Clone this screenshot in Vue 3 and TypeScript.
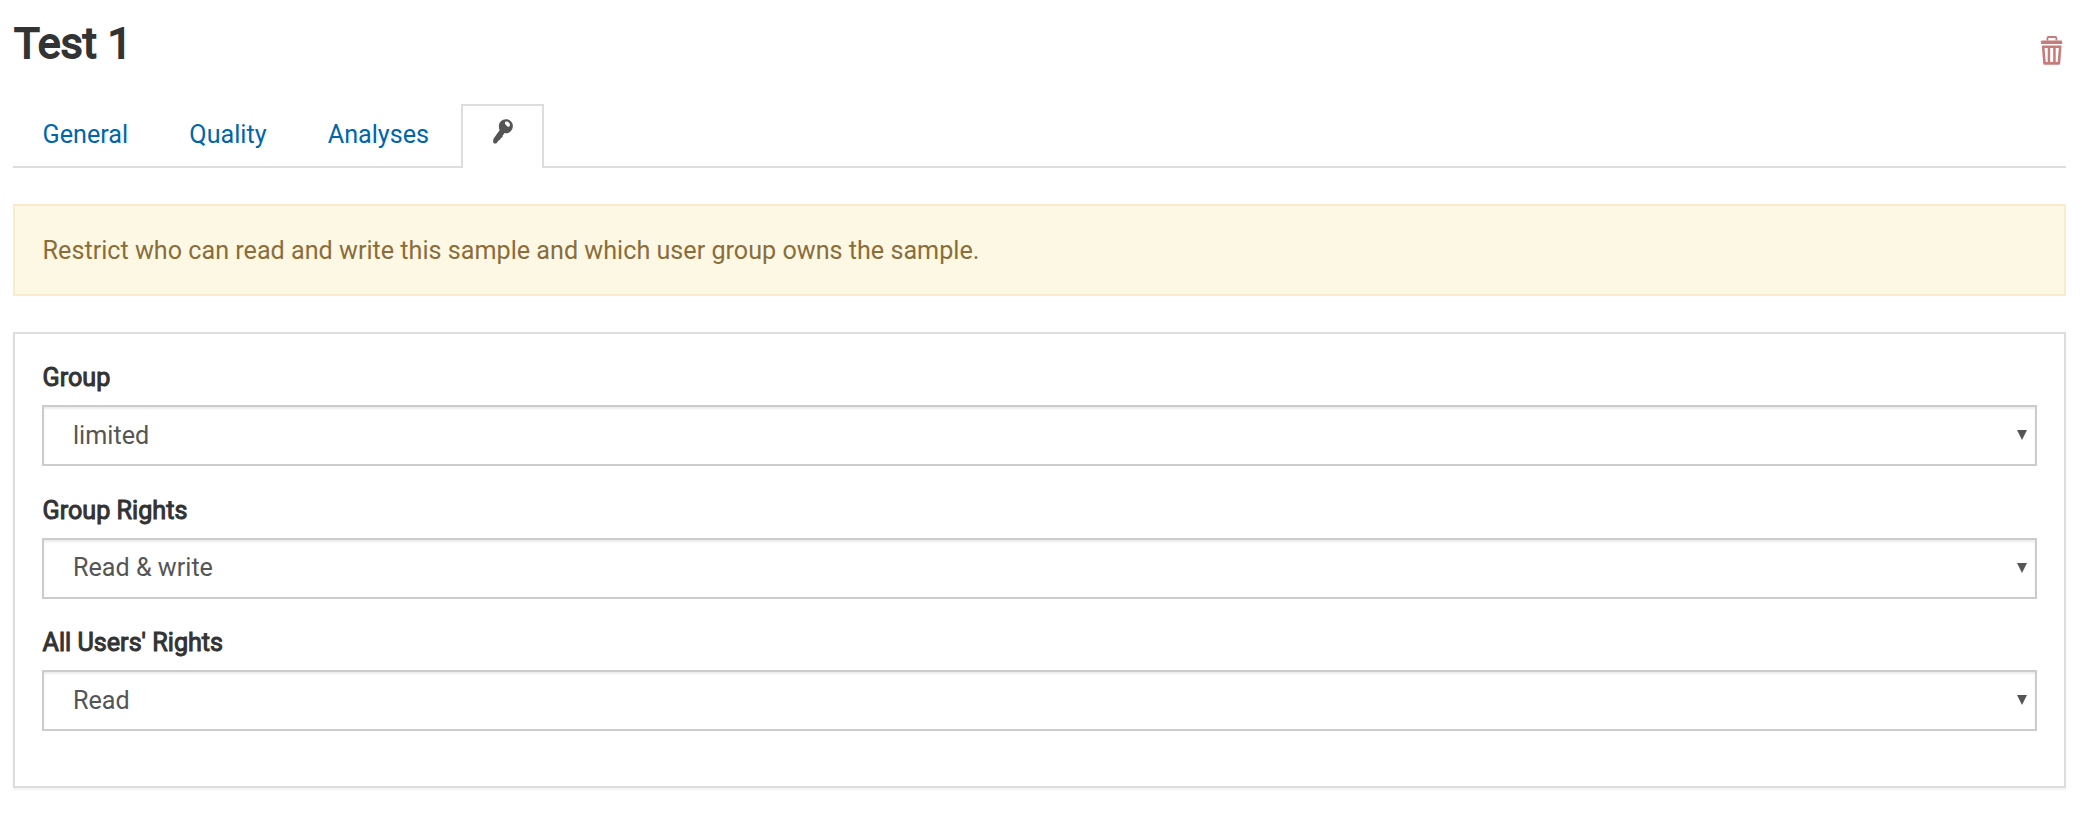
<script setup lang="ts">
import { ref } from 'vue'

interface Field {
  id: string
  label: string
  value: string
  options: string[]
}

const tabs: string[] = ['General', 'Quality', 'Analyses']

const rights: string[] = ['None', 'Read', 'Read & write']

const fields = ref<Field[]>([
  { id: 'group', label: 'Group', value: 'limited', options: ['limited'] },
  { id: 'group-rights', label: 'Group Rights', value: 'Read & write', options: rights },
  { id: 'all-rights', label: "All Users' Rights", value: 'Read', options: rights },
])
</script>

<template>
  <main class="page">
    <header class="header">
      <h1 class="title">Test 1</h1>
      <button class="trash" type="button" aria-label="Remove">
        <svg width="22" height="30" viewBox="0 0 22 30">
          <path class="handle" d="M6.4 5.6V3.2Q6.4 2 7.6 2H14.2Q15.4 2 15.4 3.2V5.6" />
          <path d="M1.4 5.6H19.9Q21.2 5.6 21.2 6.9V9H0V6.9Q0 5.6 1.4 5.6Z" />
          <path
            fill-rule="evenodd"
            d="M0.8 10.4H20.6L19.2 28.4Q19.1 29.8 17.8 29.8H3.6Q2.3 29.8 2.2 28.4ZM3.6 13L4.7 27H6.7V13ZM9.2 13V27H12.2V13ZM14.7 13V27H16.7L17.8 13Z"
          />
        </svg>
      </button>
    </header>

    <nav class="tabs">
      <a v-for="tab in tabs" :key="tab" class="tab">{{ tab }}</a>
      <a class="tab active" aria-label="Rights">
        <svg width="20" height="25" viewBox="0 0 20 25">
          <path
            fill-rule="evenodd"
            d="M12.9 0.2C16.9 0.2 19.9 3.2 19.9 7C19.9 11 17 14.2 13 14.2C12.5 14.2 12 14.1 11.5 14L9.8 16.6L9.2 18.4L7.8 19L7.2 20.6L5.6 21.4L3.9 23.7Q2.8 25 1.3 24.4Q0 23.8 0.1 22.2L0.5 19.8L6.6 11.2C6.1 9.9 5.9 8.5 5.9 7C5.9 3.2 9 0.2 12.9 0.2ZM12.5 2.8C11.7 3.5 11.7 4.6 12.4 5.5L14.2 7.3C15 8 16.2 8 16.7 7.1C17.2 6.2 17 4.9 16.1 3.8C15 2.4 13.5 2 12.5 2.8Z"
          />
        </svg>
      </a>
      <span class="rest"></span>
    </nav>

    <div class="alert">
      Restrict who can read and write this sample and which user group owns the sample.
    </div>

    <form class="panel">
      <div v-for="field in fields" :key="field.id" class="field">
        <label class="label" :for="field.id">{{ field.label }}</label>
        <div class="control">
          <select :id="field.id" v-model="field.value" class="select">
            <option v-for="option in field.options" :key="option" :value="option">{{ option }}</option>
          </select>
          <svg class="arrow" width="10" height="10" viewBox="0 0 10 10">
            <path d="M0 0H10L5 10Z" />
          </svg>
        </div>
      </div>
    </form>
  </main>
</template>

<style>
body {
  margin: 0;
  background: #fff;
}
</style>

<style scoped>
.page {
  box-sizing: border-box;
  height: 828px;
  padding: 0 16px 0 13px;
  font: 25.17px/36px Roboto, "Liberation Sans", sans-serif;
  color: #333;
}

.header {
  display: flex;
  justify-content: space-between;
  height: 104px;
}

.title {
  margin: 18px 0 0 1px;
  font-size: 43.2px;
  font-weight: 400;
  line-height: 52px;
  -webkit-text-stroke: 1.8px #333;
}

.trash {
  width: 22px;
  height: 30px;
  margin: 35px 3px 0 0;
  padding: 0;
  border: 0;
  background: none;
}

.trash svg {
  display: block;
  fill: #c77c7b;
}

.trash .handle {
  fill: none;
  stroke: #c77c7b;
  stroke-width: 1.8;
}

.tabs {
  display: flex;
  height: 64px;
}

.tab {
  box-sizing: border-box;
  padding: 13px 31.6px 0 29.6px;
  border-bottom: 2px solid #ddd;
  color: #06a;
}

.tab.active {
  width: 83px;
  padding: 13px 0 0 30px;
  border: 2px solid #ddd;
  border-bottom: 0;
}

.tab.active svg {
  display: block;
  fill: #555;
}

.rest {
  flex: 1;
  border-bottom: 2px solid #ddd;
}

.alert {
  box-sizing: border-box;
  height: 92px;
  margin-top: 36px;
  padding: 27px 27.6px;
  border: 2px solid #faebcc;
  background: #fcf8e3;
  color: #8a6d3b;
}

.panel {
  box-sizing: border-box;
  height: 456px;
  margin-top: 36px;
  padding: 26px 27px 0;
  border: 2px solid #ddd;
  box-shadow: 0 2px 2px rgba(0, 0, 0, 0.05);
}

.field {
  height: 132.5px;
}

.label {
  display: block;
  height: 45px;
  margin-left: 0.6px;
  -webkit-text-stroke: 1px #333;
}

.control {
  position: relative;
  height: 61px;
}

.select {
  box-sizing: border-box;
  display: block;
  width: 100%;
  height: 61px;
  margin: 0;
  padding: 0 40px 0 29px;
  appearance: none;
  border: 2px solid #ccc;
  border-radius: 0;
  outline: 0;
  background: #fff;
  box-shadow: inset 0 2px 2px rgba(0, 0, 0, 0.075);
  color: #555;
  font: inherit;
}

.arrow {
  position: absolute;
  top: 25px;
  right: 10px;
  fill: #555;
  pointer-events: none;
}
</style>
